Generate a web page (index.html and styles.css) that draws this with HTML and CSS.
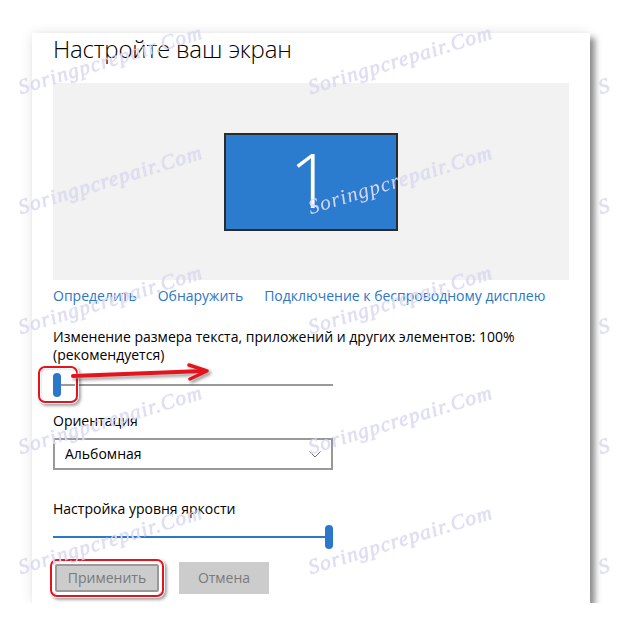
FILE: index.html
```html
<!DOCTYPE html>
<html lang="ru">
<head>
<meta charset="utf-8">
<title>Настройте ваш экран</title>
<link rel="stylesheet" href="styles.css">
</head>
<body>
<div class="page">
  <div class="card">
    <h1 class="title">Настройте ваш экран</h1>
    <div class="preview">
      <div class="monitor">1</div>
    </div>
    <div class="links">
      <a class="link">Определить</a>
      <a class="link">Обнаружить</a>
      <a class="link">Подключение к беспроводному дисплею</a>
    </div>
    <p class="label scale-label">Изменение размера текста, приложений и других элементов: 100%<br>(рекомендуется)</p>
    <div class="slider scale-slider">
      <div class="thumb"></div>
      <div class="track"></div>
      <div class="mark-box"></div>
      <svg class="mark-arrow" width="150" height="24" viewBox="0 0 150 24">
        <path d="M2 14 L132 9" stroke="#e3141c" stroke-width="4" fill="none" stroke-linecap="round"/>
        <path d="M118 3 L136 9 L119 17" stroke="#e3141c" stroke-width="3.5" fill="none" stroke-linejoin="round" stroke-linecap="round"/>
      </svg>
    </div>
    <p class="label orient-label">Ориентация</p>
    <div class="select">
      <span class="select-value">Альбомная</span>
      <svg class="chevron" width="12" height="7" viewBox="0 0 12 7"><path d="M0.5 0.5 L6 6 L11.5 0.5" stroke="#6d6d6d" stroke-width="1" fill="none"/></svg>
    </div>
    <p class="label bright-label">Настройка уровня яркости</p>
    <div class="slider bright-slider">
      <div class="fill"></div>
      <div class="thumb"></div>
    </div>
    <div class="buttons">
      <button class="btn btn-apply">Применить</button>
      <button class="btn btn-cancel">Отмена</button>
    </div>
  </div>
</div>
<div class="wm-layer">
  <div class="wm-grid">
    <div class="wm-cell"><span class="wm">Soringpcrepair.Com</span></div><div class="wm-cell"><span class="wm">Soringpcrepair.Com</span></div><div class="wm-cell"><span class="wm">S</span></div>
    <div class="wm-cell"><span class="wm">Soringpcrepair.Com</span></div><div class="wm-cell"><span class="wm">Soringpcrepair.Com</span></div><div class="wm-cell"><span class="wm">S</span></div>
    <div class="wm-cell"><span class="wm">Soringpcrepair.Com</span></div><div class="wm-cell"><span class="wm">Soringpcrepair.Com</span></div><div class="wm-cell"><span class="wm">S</span></div>
    <div class="wm-cell"><span class="wm">Soringpcrepair.Com</span></div><div class="wm-cell"><span class="wm">Soringpcrepair.Com</span></div><div class="wm-cell"><span class="wm">S</span></div>
    <div class="wm-cell"><span class="wm">Soringpcrepair.Com</span></div><div class="wm-cell"><span class="wm">Soringpcrepair.Com</span></div><div class="wm-cell"><span class="wm">S</span></div>
  </div>
</div>
</body>
</html>
```

FILE: styles.css
```css
html, body {
  margin: 0;
  padding: 0;
  background: #ffffff;
  overflow: hidden;
}
body {
  font-family: "Open Sans", "Noto Sans", sans-serif;
  color: #000;
}
.page {
  padding: 33px 0 0 32px;
}
.card {
  width: 558px;
  height: 570px;
  box-sizing: border-box;
  padding: 0 21px;
  background: #fff;
  box-shadow: 5px 5px 6px rgba(0,0,0,0.42), 0 0 12px rgba(0,0,0,0.10);
}
.title {
  margin: 0;
  font-size: 24px;
  font-weight: 300;
  line-height: 32px;
  letter-spacing: -0.2px;
}
.preview {
  margin-top: 18px;
  height: 197px;
  background: #f2f2f2;
  display: flex;
  align-items: center;
  justify-content: center;
}
.monitor {
  width: 174px;
  height: 98px;
  box-sizing: border-box;
  border: 2px solid #2b2b2b;
  background: #2b7bce;
  color: #fff;
  font-size: 76px;
  font-weight: 300;
  line-height: 76px;
  display: flex;
  align-items: center;
  justify-content: center;
  padding-bottom: 6px;
}
.links {
  margin-top: 6px;
  display: flex;
  gap: 21px;
  font-size: 14px;
  line-height: 20px;
}
.link {
  color: #2b76c6;
}
.label {
  margin: 0;
  font-size: 14px;
  line-height: 18px;
}
.scale-label {
  margin-top: 22px;
}
.slider {
  position: relative;
  width: 280px;
  height: 24px;
  display: flex;
  align-items: center;
}
.scale-slider {
  margin-top: 9px;
}
.thumb {
  width: 8px;
  height: 24px;
  border-radius: 4px;
  background: #2b78cb;
  flex: none;
}
.track {
  flex: 1;
  height: 2px;
  background: #999;
}
.fill {
  flex: 1;
  height: 2px;
  background: #2b78cb;
}
.mark-box {
  position: absolute;
  left: -15px;
  top: -7px;
  width: 40px;
  height: 37px;
  box-sizing: border-box;
  border: 2px solid #e3141c;
  border-radius: 7px;
  box-shadow: inset 0 0 0 1px #fff, 0 0 0 1px #fff, 2px 2px 3px 1px rgba(0,0,0,0.35), inset 1px 1px 2px rgba(0,0,0,0.25);
}
.mark-arrow {
  position: absolute;
  left: 18px;
  top: -11px;
  filter: drop-shadow(0 0 1px #fff) drop-shadow(2px 2px 1.5px rgba(0,0,0,0.4));
}
.orient-label {
  margin-top: 15px;
}
.select {
  margin-top: 8px;
  width: 280px;
  height: 32px;
  box-sizing: border-box;
  border: 2px solid #999;
  padding: 0 10px;
  display: flex;
  align-items: center;
  justify-content: space-between;
  font-size: 14px;
  line-height: 18px;
}
.bright-label {
  margin-top: 30px;
}
.bright-slider {
  margin-top: 7px;
}
.buttons {
  margin-top: 13px;
  display: flex;
  gap: 18px;
}
.btn {
  height: 32px;
  border: none;
  background: #cccccc;
  color: #7a7a7a;
  font-family: inherit;
  font-size: 14px;
  line-height: 18px;
  padding: 0;
}
.btn-apply {
  position: relative;
  width: 108px;
  border-radius: 4px;
  box-shadow: inset 0 0 0 2px #fff, inset 0 0 0 4px #9a9a9a;
}
.btn-apply::after {
  content: "";
  position: absolute;
  left: -3px;
  top: -3px;
  right: -3px;
  bottom: -3px;
  border: 2px solid #e3141c;
  border-radius: 7px;
  box-shadow: 0 0 0 1px #fff, 2px 2px 3px 1px rgba(0,0,0,0.35);
}
.btn-cancel {
  width: 90px;
}
.wm-layer {
  position: fixed;
  inset: 0;
  overflow: hidden;
  pointer-events: none;
}
.wm-grid {
  position: absolute;
  left: 22px;
  top: 76px;
  display: grid;
  grid-template-columns: 290px 290px 20px;
  grid-auto-rows: 120px;
}
.wm-cell {
  height: 22px;
}
.wm {
  display: inline-block;
  font-family: "Liberation Serif", serif;
  font-style: italic;
  font-size: 21px;
  line-height: 22px;
  letter-spacing: 1.2px;
  white-space: nowrap;
  color: rgba(226, 226, 246, 0.9);
  text-shadow: 0 0 1px rgba(120, 120, 190, 0.45);
  transform: rotate(-17deg);
  transform-origin: 0 100%;
}
```
